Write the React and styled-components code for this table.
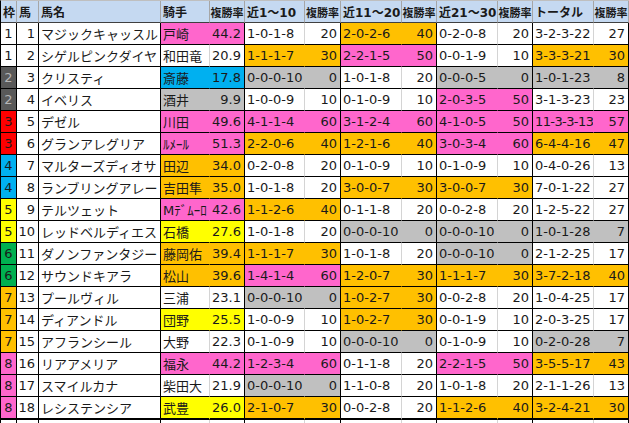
import React from 'react';
import styled, { createGlobalStyle } from 'styled-components';

const GlobalStyle = createGlobalStyle`
  body {
    margin: 0;
    background: #fff;
    font-family: 'DejaVu Sans', 'Noto Sans CJK JP', sans-serif;
  }
`;

const COLS = '16px 22px 122px 49px 35px 60px 36px 61px 35px 61px 35px 61px 35px';

const Sheet = styled.div`
  display: grid;
  grid-template-columns: ${COLS};
  border-left: 1px solid #000;
  border-top: 1px solid #bfbfbf;
  width: max-content;
`;

const HeadCell = styled.div`
  box-sizing: border-box;
  height: 22px;
  background: #c5d9f1;
  border-right: 1px solid #a6a6a6;
  border-bottom: 1px solid #404040;
  display: flex;
  align-items: center;
  padding: 0 ${p => (p.$small ? '0' : '2px')};
  justify-content: ${p => (p.$small ? 'center' : 'flex-start')};
  font-weight: bold;
  font-size: ${p => (p.$small ? '11px' : '12px')};
  color: #1a1a1a;
  white-space: nowrap;
  overflow: hidden;
`;

const justify = { left: 'flex-start', right: 'flex-end', center: 'center' };

const Cell = styled.div`
  box-sizing: border-box;
  height: ${p => (p.$last ? '23px' : '22px')};
  background: ${p => p.$fill || '#fff'};
  border-right: 1px solid ${p => (p.$edge ? '#000' : p.$fill || '#d4d4d4')};
  border-bottom: ${p => (p.$last ? '2px' : '1px')} solid #000;
  display: flex;
  align-items: center;
  justify-content: ${p => justify[p.$align || 'left']};
  padding: 0 ${p => (p.$align === 'right' ? '3px' : '0')} 0 ${p => (p.$align === 'left' || !p.$align ? '2px' : '0')};
  font-size: 13px;
  letter-spacing: ${p => (p.$tight ? '-0.6px' : 'normal')};
  color: ${p => p.$ink || '#1a1a1a'};
  white-space: nowrap;
  overflow: hidden;
`;

const Tail = styled.div`
  box-sizing: border-box;
  height: 6px;
  border-right: 1px solid ${p => (p.$edge ? '#000' : '#d4d4d4')};
`;

const FILL = {
  p: '#ff66cc',
  o: '#ffc000',
  g: '#c0c0c0',
  b: '#00b0f0',
  y: '#ffff00',
  w: null,
};

const FRAME = {
  1: ['#fff', '#1a1a1a'],
  2: ['#595959', '#b5b5b5'],
  3: ['#ff0000', '#1a1a1a'],
  4: ['#00b0f0', '#1a1a1a'],
  5: ['#ffff00', '#1a1a1a'],
  6: ['#00b050', '#1a1a1a'],
  7: ['#ffc000', '#1a1a1a'],
  8: ['#ff66cc', '#1a1a1a'],
};

const headers = [
  { label: '枠' },
  { label: '馬' },
  { label: '馬名' },
  { label: '騎手' },
  { label: '複勝率', small: true },
  { label: '近1～10' },
  { label: '複勝率', small: true },
  { label: '近11～20' },
  { label: '複勝率', small: true },
  { label: '近21～30' },
  { label: '複勝率', small: true },
  { label: 'トータル' },
  { label: '複勝率', small: true },
];

// frame, no, name, jockey, jockey rate + fill, then 4 groups "record rate fill"
const rows = [
  [1, 1, 'マジックキャッスル', '戸崎', '44.2 p', '1-0-1-8 20 w', '2-0-2-6 40 o', '0-2-0-8 20 w', '3-2-3-22 27 w'],
  [1, 2, 'シゲルピンクダイヤ', '和田竜', '20.9 w', '1-1-1-7 30 o', '2-2-1-5 50 p', '0-0-1-9 10 w', '3-3-3-21 30 o'],
  [2, 3, 'クリスティ', '斎藤', '17.8 b', '0-0-0-10 0 g', '1-0-1-8 20 w', '0-0-0-5 0 g', '1-0-1-23 8 g'],
  [2, 4, 'イベリス', '酒井', '9.9 g', '1-0-0-9 10 w', '0-1-0-9 10 w', '2-0-3-5 50 p', '3-1-3-23 23 w'],
  [3, 5, 'デゼル', '川田', '49.6 p', '4-1-1-4 60 p', '3-1-2-4 60 p', '4-1-0-5 50 p', '11-3-3-13 57 p'],
  [3, 6, 'グランアレグリア', 'ﾙﾒｰﾙ', '51.3 p', '2-2-0-6 40 o', '1-2-1-6 40 o', '3-0-3-4 60 p', '6-4-4-16 47 o'],
  [4, 7, 'マルターズディオサ', '田辺', '34.0 o', '0-2-0-8 20 w', '0-1-0-9 10 w', '0-1-0-9 10 w', '0-4-0-26 13 w'],
  [4, 8, 'ランブリングアレー', '吉田隼', '35.0 o', '1-0-1-8 20 w', '3-0-0-7 30 o', '3-0-0-7 30 o', '7-0-1-22 27 w'],
  [5, 9, 'テルツェット', 'Mﾃﾞﾑｰﾛ', '42.6 p', '1-1-2-6 40 o', '0-1-1-8 20 w', '0-0-2-8 20 w', '1-2-5-22 27 w'],
  [5, 10, 'レッドベルディエス', '石橋', '27.6 y', '1-0-1-8 20 w', '0-0-0-10 0 g', '0-0-0-10 0 g', '1-0-1-28 7 g'],
  [6, 11, 'ダノンファンタジー', '藤岡佑', '39.4 o', '1-1-1-7 30 o', '1-0-1-8 20 w', '0-0-0-10 0 g', '2-1-2-25 17 w'],
  [6, 12, 'サウンドキアラ', '松山', '39.6 o', '1-4-1-4 60 p', '1-2-0-7 30 o', '1-1-1-7 30 o', '3-7-2-18 40 o'],
  [7, 13, 'プールヴィル', '三浦', '23.1 w', '0-0-0-10 0 g', '1-0-2-7 30 o', '0-0-2-8 20 w', '1-0-4-25 17 w'],
  [7, 14, 'ディアンドル', '団野', '25.5 y', '1-0-0-9 10 w', '1-0-2-7 30 o', '0-0-1-9 10 w', '2-0-3-25 17 w'],
  [7, 15, 'アフランシール', '大野', '22.3 w', '0-1-0-9 10 w', '0-0-0-10 0 g', '0-1-0-9 10 w', '0-2-0-28 7 g'],
  [8, 16, 'リアアメリア', '福永', '44.2 p', '1-2-3-4 60 p', '0-1-1-8 20 w', '2-2-1-5 50 p', '3-5-5-17 43 o'],
  [8, 17, 'スマイルカナ', '柴田大', '21.9 w', '0-0-0-10 0 g', '1-1-0-8 20 w', '1-0-1-8 20 w', '2-1-1-26 13 w'],
  [8, 18, 'レシステンシア', '武豊', '26.0 y', '2-1-0-7 30 o', '0-0-2-8 20 w', '1-1-2-6 40 o', '3-2-4-21 30 o'],
];

const tailEdges = [true, true, true, false, true, false, true, false, true, false, true, false, true];

function HorseRow({ row, last }) {
  const [frame, no, name, jockey, jr, ...groups] = row;
  const [jRate, jKey] = jr.split(' ');
  const jFill = FILL[jKey];
  const [frameBg, frameInk] = FRAME[frame];

  return (
    <>
      <Cell $fill={frameBg} $ink={frameInk} $edge $align="center" $last={last}>{frame}</Cell>
      <Cell $edge $align="right" $last={last}>{no}</Cell>
      <Cell $edge $last={last}>{name}</Cell>
      <Cell $fill={jFill} $last={last}>{jockey}</Cell>
      <Cell $fill={jFill} $edge $align="right" $last={last}>{jRate}</Cell>
      {groups.map((g, i) => {
        const [rec, rate, key] = g.split(' ');
        const fill = FILL[key];
        return (
          <React.Fragment key={i}>
            <Cell $fill={fill} $tight={rec.length > 8} $last={last}>{rec}</Cell>
            <Cell $fill={fill} $edge $align="right" $last={last}>{rate}</Cell>
          </React.Fragment>
        );
      })}
    </>
  );
}

export default function App() {
  return (
    <>
      <GlobalStyle />
      <Sheet>
        {headers.map((h, i) => (
          <HeadCell key={i} $small={h.small}>{h.label}</HeadCell>
        ))}
        {rows.map((r, i) => (
          <HorseRow key={r[1]} row={r} last={i === rows.length - 1} />
        ))}
        {tailEdges.map((e, i) => (
          <Tail key={i} $edge={e} />
        ))}
      </Sheet>
    </>
  );
}
